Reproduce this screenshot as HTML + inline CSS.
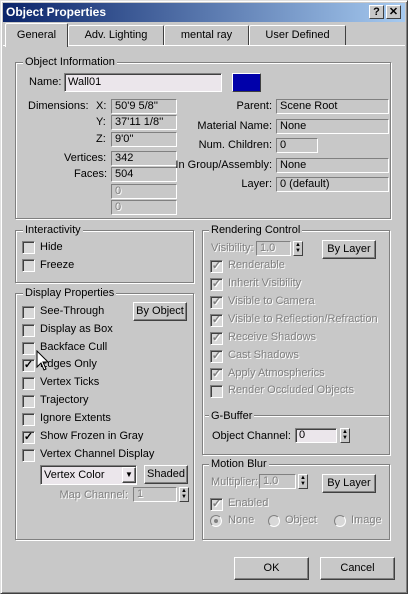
<!DOCTYPE html><html><head><style>
*{box-sizing:border-box;margin:0;padding:0}
body{width:408px;height:594px;background:#c8c8c8;font:11px "Liberation Sans",sans-serif;color:#000;position:relative;overflow:hidden}
.a{position:absolute;white-space:nowrap}
.win{left:0;top:0;width:408px;height:594px;border:1px solid;border-color:#e0e0e0 #404040 #404040 #e0e0e0;box-shadow:inset 1px 1px 0 #fff,inset -1px -1px 0 #808080}
.title{left:3px;top:3px;width:402px;height:19px;background:linear-gradient(90deg,#0a246a,#a6caf0);color:#fff;font-weight:bold;font-size:12px;line-height:19px;padding-left:3px}
.tb{width:15px;height:14px;top:5px;background:#c8c8c8;border:1px solid;border-color:#fff #404040 #404040 #fff;font-weight:bold;font-size:11px;line-height:12px;text-align:center;color:#000}
.tab{top:25px;height:20px;border:1px solid;border-bottom:none;border-color:#fff #404040 #404040 #fff;border-radius:2px 2px 0 0;text-align:center;line-height:18px}
.grp{border:1px solid #808080;box-shadow:1px 1px 0 #fff,inset 1px 1px 0 #fff}
.gl{background:#c8c8c8;padding:0 2px;line-height:12px}
.f{height:15px;border:1px solid;border-color:#808080 #fff #fff #808080;box-shadow:inset 1px 1px 0 #404040;padding-left:3px;line-height:13px}
.ro{background:#c8c8c8;box-shadow:none;border-color:#808080 #fff #fff #808080}
.cb{width:13px;height:13px;border:1px solid;border-color:#808080 #fff #fff #808080;box-shadow:inset 1px 1px 0 #404040;background:#d8d8d8;font-size:11px;line-height:10px;text-align:center;font-weight:bold}
.dis{color:#808080;text-shadow:1px 1px 0 #fff}
.btn{border:1px solid;border-color:#fff #404040 #404040 #fff;box-shadow:inset -1px -1px 0 #808080;text-align:center}
.sp{width:10px;height:15px;border:1px solid;border-color:#fff #404040 #404040 #fff;font-size:6px;line-height:6px;text-align:center}
.rd{width:12px;height:12px;border-radius:50%;border:1px solid;border-color:#808080 #fff #fff #808080;background:#d8d8d8}
</style></head><body>
<div class="a win"></div>
<div class="a title">Object Properties</div>
<div class="a tb" style="left:369px">?</div><div class="a tb" style="left:386px">✕</div>
<div class="a" style="left:3px;top:45px;width:402px;height:546px;border-top:1px solid #fff"></div>
<div class="a tab" style="left:68px;width:96px">Adv. Lighting</div>
<div class="a tab" style="left:164px;width:85px">mental ray</div>
<div class="a tab" style="left:249px;width:97px">User Defined</div>
<div class="a tab" style="left:5px;top:23px;height:24px;width:63px;background:#c8c8c8;line-height:22px">General</div>

<div class="a grp" style="left:15px;top:62px;width:376px;height:157px"></div>
<div class="a gl" style="left:23px;top:56px">Object Information</div>
<div class="a" style="left:29px;top:76px">Name:</div>
<div class="a f" style="left:64px;top:73px;width:158px;height:19px;background:#ebe6eb;line-height:17px">Wall01</div>
<div class="a" style="left:232px;top:73px;width:29px;height:19px;background:#0000aa;border:1px solid;border-color:#fff #404040 #404040 #fff"></div>
<div class="a" style="left:28px;top:100px">Dimensions:</div>
<div class="a" style="left:96px;top:100px">X:</div><div class="a" style="left:96px;top:116px">Y:</div><div class="a" style="left:96px;top:133px">Z:</div>
<div class="a" style="left:64px;top:152px">Vertices:</div><div class="a" style="left:74px;top:168px">Faces:</div>
<div class="a f ro" style="left:111px;top:99px;width:66px">50'9 5/8''</div>
<div class="a f ro" style="left:111px;top:115px;width:66px">37'11 1/8''</div>
<div class="a f ro" style="left:111px;top:132px;width:66px">9'0''</div>
<div class="a f ro" style="left:111px;top:151px;width:66px">342</div>
<div class="a f ro" style="left:111px;top:167px;width:66px">504</div>
<div class="a f ro dis" style="left:111px;top:184px;width:66px">0</div>
<div class="a f ro dis" style="left:111px;top:200px;width:66px">0</div>
<div class="a" style="right:136px;top:100px">Parent:</div>
<div class="a" style="right:136px;top:120px">Material Name:</div>
<div class="a" style="right:136px;top:139px">Num. Children:</div>
<div class="a" style="right:136px;top:159px">In Group/Assembly:</div>
<div class="a" style="right:136px;top:178px">Layer:</div>
<div class="a f ro" style="left:276px;top:99px;width:113px">Scene Root</div>
<div class="a f ro" style="left:276px;top:119px;width:113px">None</div>
<div class="a f ro" style="left:276px;top:138px;width:42px">0</div>
<div class="a f ro" style="left:276px;top:158px;width:113px">None</div>
<div class="a f ro" style="left:276px;top:177px;width:113px">0 (default)</div>

<div class="a grp" style="left:15px;top:230px;width:179px;height:53px"></div>
<div class="a gl" style="left:23px;top:224px">Interactivity</div>
<div class="a cb" style="left:22px;top:241px"></div><div class="a" style="left:40px;top:241px">Hide</div>
<div class="a cb" style="left:22px;top:259px"></div><div class="a" style="left:40px;top:259px">Freeze</div>

<div class="a grp" style="left:15px;top:293px;width:179px;height:247px"></div>
<div class="a gl" style="left:23px;top:287px">Display Properties</div>
<div class="a cb" style="left:22px;top:306px"></div><div class="a" style="left:40px;top:305px">See-Through</div>
<div class="a cb" style="left:22px;top:324px"></div><div class="a" style="left:40px;top:323px">Display as Box</div>
<div class="a cb" style="left:22px;top:342px"></div><div class="a" style="left:40px;top:341px">Backface Cull</div>
<div class="a cb" style="left:22px;top:359px">✓</div><div class="a" style="left:40px;top:358px">Edges Only</div>
<div class="a cb" style="left:22px;top:377px"></div><div class="a" style="left:40px;top:376px">Vertex Ticks</div>
<div class="a cb" style="left:22px;top:395px"></div><div class="a" style="left:40px;top:394px">Trajectory</div>
<div class="a cb" style="left:22px;top:413px"></div><div class="a" style="left:40px;top:412px">Ignore Extents</div>
<div class="a cb" style="left:22px;top:431px">✓</div><div class="a" style="left:40px;top:430px">Show Frozen in Gray</div>
<div class="a cb" style="left:22px;top:449px"></div><div class="a" style="left:40px;top:448px">Vertex Channel Display</div>
<svg class="a" style="left:36px;top:350px" width="14" height="22"><path d="M1 1L1 17L5 13L8 20L10 19L7 12L12 12Z" fill="#fff" stroke="#000"/></svg>
<div class="a btn" style="left:133px;top:302px;width:54px;height:19px;line-height:17px;border-color:#fff #404040 #404040 #fff">By Object</div>
<div class="a f" style="left:40px;top:465px;width:97px;height:20px;background:#ebe6eb;line-height:18px">Vertex Color</div>
<div class="a btn" style="left:122px;top:467px;width:14px;height:16px;font-size:8px;line-height:14px">▼</div>
<div class="a btn" style="left:144px;top:465px;width:44px;height:19px;line-height:17px">Shaded</div>
<div class="a dis" style="right:280px;top:489px">Map Channel:</div>
<div class="a f ro dis" style="left:133px;top:487px;width:44px">1</div>
<div class="a sp" style="left:179px;top:487px">▲<br>▼</div>

<div class="a grp" style="left:202px;top:230px;width:188px;height:225px"></div>
<div class="a gl" style="left:209px;top:224px">Rendering Control</div>
<div class="a dis" style="left:211px;top:242px">Visibility:</div>
<div class="a f ro dis" style="left:256px;top:241px;width:35px">1.0</div>
<div class="a sp" style="left:293px;top:241px">▲<br>▼</div>
<div class="a btn" style="left:322px;top:240px;width:54px;height:19px;line-height:17px">By Layer</div>
<div class="a cb dis" style="left:210px;top:260px">✓</div><div class="a dis" style="left:228px;top:259px">Renderable</div>
<div class="a cb dis" style="left:210px;top:278px">✓</div><div class="a dis" style="left:228px;top:277px">Inherit Visibility</div>
<div class="a cb dis" style="left:210px;top:296px">✓</div><div class="a dis" style="left:228px;top:295px">Visible to Camera</div>
<div class="a cb dis" style="left:210px;top:314px">✓</div><div class="a dis" style="left:228px;top:313px">Visible to Reflection/Refraction</div>
<div class="a cb dis" style="left:210px;top:332px">✓</div><div class="a dis" style="left:228px;top:331px">Receive Shadows</div>
<div class="a cb dis" style="left:210px;top:350px">✓</div><div class="a dis" style="left:228px;top:349px">Cast Shadows</div>
<div class="a cb dis" style="left:210px;top:368px">✓</div><div class="a dis" style="left:228px;top:367px">Apply Atmospherics</div>
<div class="a cb dis" style="left:210px;top:385px"></div><div class="a dis" style="left:228px;top:384px">Render Occluded Objects</div>
<div class="a" style="left:205px;top:415px;width:184px;border-top:1px solid #808080;border-bottom:1px solid #fff"></div>
<div class="a gl" style="left:209px;top:410px">G-Buffer</div>
<div class="a" style="left:212px;top:430px">Object Channel:</div>
<div class="a f" style="left:295px;top:428px;width:42px;background:#ebe6eb">0</div>
<div class="a sp" style="left:340px;top:428px">▲<br>▼</div>

<div class="a grp" style="left:202px;top:464px;width:188px;height:76px"></div>
<div class="a gl" style="left:209px;top:458px">Motion Blur</div>
<div class="a dis" style="left:211px;top:476px">Multiplier:</div>
<div class="a f ro dis" style="left:259px;top:474px;width:37px">1.0</div>
<div class="a sp" style="left:298px;top:474px">▲<br>▼</div>
<div class="a btn" style="left:322px;top:474px;width:54px;height:19px;line-height:17px">By Layer</div>
<div class="a cb dis" style="left:210px;top:498px">✓</div><div class="a dis" style="left:228px;top:497px">Enabled</div>
<div class="a rd" style="left:210px;top:515px"><div style="width:4px;height:4px;border-radius:50%;background:#808080;margin:3px"></div></div><div class="a dis" style="left:228px;top:514px">None</div>
<div class="a rd" style="left:268px;top:515px"></div><div class="a dis" style="left:285px;top:514px">Object</div>
<div class="a rd" style="left:334px;top:515px"></div><div class="a dis" style="left:351px;top:514px">Image</div>

<div class="a btn" style="left:234px;top:557px;width:75px;height:23px;line-height:21px">OK</div>
<div class="a btn" style="left:320px;top:557px;width:75px;height:23px;line-height:21px">Cancel</div>
</body></html>
